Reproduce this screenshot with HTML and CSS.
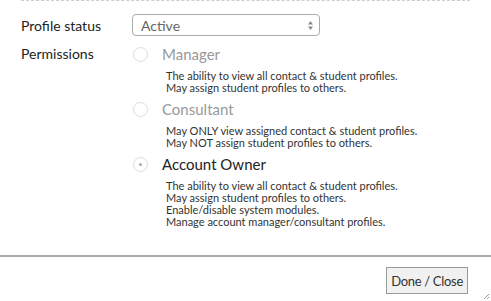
FILE: index.html
```html
<!DOCTYPE html>
<html lang="en">
<head>
    <meta charset="UTF-8">
    <title>Profile permissions</title>
    <link rel="stylesheet" href="styles.css">
</head>
<body>
    <div class="dialog">
        <div class="form">
            <div class="row">
                <div class="label">Profile status</div>
                <div class="field">
                    <div class="select">
                        <span>Active</span>
                        <svg class="arrows" width="7" height="11" viewBox="0 0 7 11">
                            <path d="M3.5 1 L6 4.5 L1 4.5 Z" fill="#888"/>
                            <path d="M3.5 10 L6 6.5 L1 6.5 Z" fill="#888"/>
                        </svg>
                    </div>
                </div>
            </div>

            <div class="row perms">
                <div class="label">Permissions</div>
                <div class="field">
                    <div class="option">
                        <div class="opt-head">
                            <span class="radio"></span>
                            <span class="opt-name muted">Manager</span>
                        </div>
                        <div class="desc">
                            The ability to view all contact &amp; student profiles.<br>
                            May assign student profiles to others.
                        </div>
                    </div>
                    <div class="option">
                        <div class="opt-head">
                            <span class="radio"></span>
                            <span class="opt-name muted">Consultant</span>
                        </div>
                        <div class="desc">
                            May ONLY view assigned contact &amp; student profiles.<br>
                            May NOT assign student profiles to others.
                        </div>
                    </div>
                    <div class="option">
                        <div class="opt-head">
                            <span class="radio checked"></span>
                            <span class="opt-name">Account Owner</span>
                        </div>
                        <div class="desc">
                            The ability to view all contact &amp; student profiles.<br>
                            May assign student profiles to others.<br>
                            Enable/disable system modules.<br>
                            Manage account manager/consultant profiles.
                        </div>
                    </div>
                </div>
            </div>
        </div>

        <div class="footer">
            <button class="button">Done / Close</button>
        </div>
        <svg class="grip" width="7" height="7" viewBox="0 0 7 7">
            <path d="M1 6 L6 1 M4 6 L6 4" stroke="#999" stroke-width="1"/>
        </svg>
    </div>
</body>
</html>
```

FILE: styles.css
```css
html {
    font-family: Lato, "Open Sans", sans-serif;
}
body {
    margin: 0;
    background-color: #ffffff;
    color: #222;
}
.dialog {
    width: 491px;
    height: 301px;
    position: relative;
    overflow: hidden;
}
.form {
    margin: 0 21px;
    border-top: 1px dashed #cccccc;
    height: 254px;
}
.row {
    display: flex;
}
.label {
    width: 111px;
    font-size: 14px;
    color: #222;
}
.row:first-child {
    margin-top: 13px;
    align-items: center;
}
.select {
    width: 173px;
    height: 20px;
    border: 1px solid #aaaaaa;
    border-radius: 4px;
    display: flex;
    align-items: center;
    justify-content: space-between;
    padding: 0 5px 0 8px;
    box-sizing: content-box;
    font-size: 14px;
    color: #666;
}
.arrows {
    display: block;
}
.perms {
    margin-top: 8px;
}
.perms .label {
    line-height: 20px;
}
.option {
    margin-bottom: 5px;
}
.opt-head {
    display: flex;
    align-items: center;
    height: 20px;
}
.radio {
    width: 13px;
    height: 13px;
    border: 1px solid #dddddd;
    border-radius: 50%;
    margin-left: 1px;
    margin-right: 14px;
    position: relative;
}
.radio.checked::after {
    content: "";
    position: absolute;
    left: 5px;
    top: 5px;
    width: 3px;
    height: 3px;
    border-radius: 50%;
    background-color: #aaaaaa;
}
.opt-name {
    font-size: 15px;
    color: #222;
}
.opt-name.muted {
    color: #999;
}
.desc {
    margin-top: 6px;
    margin-left: 34px;
    font-size: 11px;
    line-height: 12px;
    color: #333;
}
.footer {
    border-top: 2px solid #aaaaaa;
    display: flex;
    justify-content: flex-end;
    padding: 10px 23px 0 0;
}
.button {
    font-family: Lato, sans-serif;
    font-size: 13px;
    letter-spacing: -0.3px;
    color: #333;
    background-color: #f1f1f1;
    border: 1px solid #999999;
    height: 27px;
    padding: 0 4px;
}
.grip {
    position: absolute;
    right: 1px;
    bottom: 1px;
}
```
